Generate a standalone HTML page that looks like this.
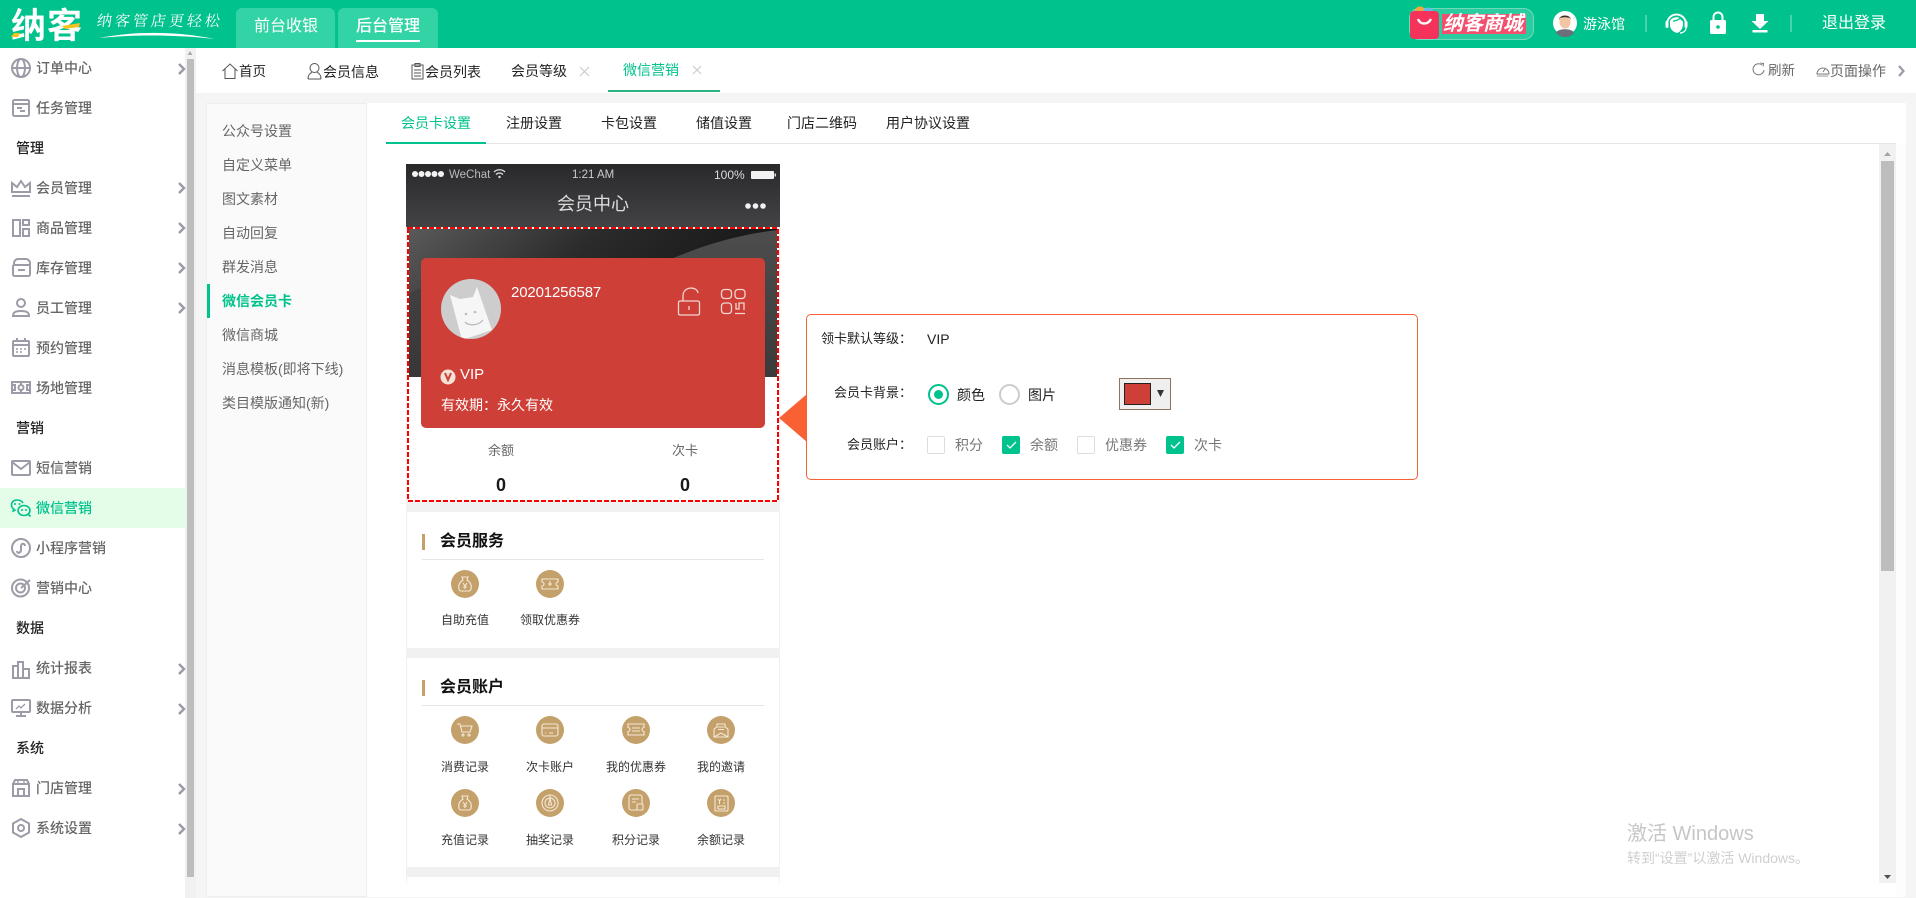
<!DOCTYPE html>
<html lang="zh"><head><meta charset="utf-8"><title>纳客</title>
<style>
html,body{margin:0;padding:0;width:1916px;height:898px;overflow:hidden;background:#f5f5f5}
body{position:relative;font-family:"Liberation Sans","Noto Sans CJK SC",sans-serif;font-size:14px;color:#333}
.a{position:absolute}
.t{position:absolute;white-space:nowrap;line-height:20px;height:20px}
svg{position:absolute;overflow:visible}
.s{left:36px;color:#666;font-weight:500}
.h{left:16px;color:#222;font-weight:500}
.m{left:222px;color:#666}
.l{color:#333;font-size:12px;width:100px;text-align:center}
.f{color:#222;font-size:13px;text-align:right;width:100px;left:812px}
.c{position:absolute;width:16px;height:16px;border:1px solid #ddd;border-radius:2px;top:436px;background:#fff}
.c.on{background:#00c28c;border-color:#00c28c}
</style></head><body>
<!-- header -->
<div class="a" style="left:0;top:0;width:1916px;height:48px;background:#00c28c"></div>
<div class="a" style="left:236px;top:8px;width:99px;height:40px;background:#32d3a5;border-radius:6px 6px 0 0"></div>
<div class="a" style="left:338px;top:8px;width:100px;height:40px;background:#32d3a5;border-radius:6px 6px 0 0"></div>
<div class="t" style="left:254px;top:17px;font-size:16px;color:#fff">前台收银</div>
<div class="t" style="left:356px;top:17px;font-size:16px;color:#fff;font-weight:500">后台管理</div>
<div class="a" style="left:356px;top:40px;width:64px;height:2px;background:#fff"></div>
<div class="t" style="left:11px;top:15px;font-size:35px;line-height:24px;height:24px;color:#fff;font-weight:700;letter-spacing:1px">纳客</div>
<div class="t" style="left:97px;top:11px;font-size:15px;color:#fff;letter-spacing:3px;font-family:'Noto Serif CJK SC',serif;transform:skewX(-8deg)">纳客管店更轻松</div>
<svg style="left:0;top:0" width="240" height="48"><path d="M11 37l3-4h6l-2 4z" fill="#f7c21c"/><path d="M62 26l18-3-1 4-14 2z" fill="#f7c21c"/><path d="M99 38C130 32 170 30 215 39C170 34 130 35 99 38z" fill="#fff"/></svg>
<!-- mall badge -->
<div class="a" style="left:1409px;top:8px;width:123px;height:30px;border:1px solid rgba(255,255,255,.3);background:rgba(255,255,255,.17);border-radius:10px"></div>
<div class="a" style="left:1442px;top:14px;width:84px;height:20px;background:#f3506f"></div>
<svg style="left:0;top:0" width="1916" height="48">
<circle cx="1420" cy="12" r="5.500" fill="#f4a93a"/><circle cx="1428" cy="13" r="5.500" fill="#63b9e8"/>
<rect x="1410" y="11" width="29" height="28" rx="4" fill="#f5335a"/>
<path d="M1418 19c2 6 10 6 13 0" stroke="#fff" stroke-width="2.400" fill="none"/>
<circle cx="1565" cy="23" r="12" fill="#fff"/><path d="M1556 33c1-5 17-5 18 0a12 12 0 0 1-18 0z" fill="#6b6f7a"/><ellipse cx="1565" cy="22" rx="5.500" ry="6.500" fill="#f2c5a3"/><path d="M1559 20c0-6 12-6 12 0l-1-2c-3-1-7-1-10 0z" fill="#3a3030"/>
<rect x="1645.500" y="15" width="1" height="17" fill="#8fe0c8"/><rect x="1790.500" y="15" width="1" height="17" fill="#8fe0c8"/>
<path d="M1667 24a9.500 9.500 0 0 1 19 0" fill="none" stroke="#fff" stroke-width="2"/><path d="M1670 21c2-5 11-5 13 0v4c-1 5-3 7-6 8-4-1-7-4-7-8z" fill="#fff"/><rect x="1665.500" y="21" width="3" height="7" rx="1.500" fill="#fff"/><rect x="1684.500" y="21" width="3" height="7" rx="1.500" fill="#fff"/><path d="M1686 28c0 3-3 5-6 5" stroke="#fff" stroke-width="1.200" fill="none"/>
<path d="M1673 21c2 0 6-1 7-3 1 1 2 2 3 3" stroke="#00c28c" stroke-width="1.300" fill="none"/>
<rect x="1710" y="20" width="16" height="14" rx="1.500" fill="#fff"/><path d="M1713.500 20v-3a4.500 4.500 0 0 1 9 0v3" stroke="#fff" stroke-width="2" fill="none"/><circle cx="1718" cy="27" r="1.800" fill="#00c28c"/>
<path d="M1756 14h8v7h4.500l-8.500 8-8.500-8h4.500z" fill="#fff"/><rect x="1752.500" y="30" width="15" height="2.500" fill="#fff"/>
</svg>
<div class="t" style="left:1443px;top:14px;font-size:20px;color:#fff;font-weight:700;font-style:italic;">纳客商城</div>
<div class="t" style="left:1583px;top:14px;color:#fff">游泳馆</div>
<div class="t" style="left:1822px;top:14px;color:#fff;font-size:16px">退出登录</div>

<!-- sidebar -->
<div class="a" style="left:0;top:48px;width:185px;height:850px;background:#fff"></div>
<div class="a" style="left:185px;top:48px;width:11px;height:850px;background:#f1f1f1"></div>
<div class="a" style="left:187px;top:59px;width:7px;height:818px;background:#bdbdbd"></div>
<div class="a" style="left:0;top:488px;width:185px;height:40px;background:#e4fde9"></div>
<div class="a" style="left:196px;top:48px;width:1720px;height:45px;background:#fff"></div>
<svg style="left:0;top:0" width="196" height="898" fill="none" stroke="#9c9ca8" stroke-width="2">
<path d="M187.500 55l2.500-4 2.500 4z" fill="#aaa" stroke="none"/>
<circle cx="21" cy="68" r="9"/><ellipse cx="21" cy="68" rx="4" ry="9"/><path d="M12 68h18"/>
<rect x="13" y="100" width="16" height="16" rx="1.500"/><path d="M13 104h16M17 108h5M20 111h5"/>
<path d="M12 192v-9l5 4 4-6 4 6 5-4v9zM12 196h18" />
<rect x="13" y="220" width="7" height="16"/><rect x="23" y="220" width="6" height="5"/><rect x="23" y="229" width="6" height="7"/>
<rect x="13" y="265" width="17" height="11" rx="1.500"/><path d="M14 265v-2c0-2 2-4 4-4h8c2 0 4 2 4 4v2M18 270h7"/>
<circle cx="21" cy="303" r="4"/><path d="M13 316c0-4 3-5 8-5s8 1 8 5z"/>
<rect x="13" y="341" width="16" height="15" rx="1"/><path d="M13 345h16M17 338v3M25 338v3" /><path d="M16 349h2M20 349h2M24 349h2M16 352h2M20 352h2" stroke-width="1.400"/>
<rect x="12" y="382" width="18" height="11"/><circle cx="21" cy="387.500" r="2.500"/><path d="M21 382v3M21 390v3M12 385h3v5h-3M30 385h-3v5h3"/>
<rect x="12" y="461" width="18" height="14" rx="1"/><path d="M12 462l9 7 9-7"/>
<g stroke="#00c28c" stroke-width="1.600"><path d="M23 503c-1-2-3-3-6-3-3.500 0-5.500 2.300-5.500 5 0 1.800.8 3 2.200 4l-.5 2 2.500-1"/><ellipse cx="24" cy="510.500" rx="6" ry="5"/><path d="M28 514l2.500 2.500"/></g>
<g fill="#00c28c" stroke="none"><circle cx="15" cy="504" r="1"/><circle cx="19.500" cy="504" r="1"/><circle cx="22" cy="510" r="1"/><circle cx="26" cy="510" r="1"/></g>
<circle cx="21" cy="548" r="9"/><path d="M17 551c0 3 4 2 4-1v-4c0-3 4-3 4 0" />
<circle cx="20.500" cy="588" r="8.500"/><circle cx="20.500" cy="588" r="4.500"/><path d="M21 588l9-8"/>
<path d="M13 678v-12h5v12zM18 678v-16h5v16zM23 678v-9h6v9z"/>
<rect x="12" y="700" width="18" height="12" rx="1"/><path d="M21 712v4M16 716h10"/><path d="M16 709l3-3 2 2 4-4" stroke-width="1.300"/>
<path d="M13 784h16v12H13zM13 784l2-4h12l2 4M18 796v-7h6v7"/><path d="M18 780v4M24 780v4" stroke-width="1.300"/>
<path d="M21 819l8 4.500v9L21 837l-8-4.500v-9z"/><circle cx="21" cy="828" r="3"/>
</svg>
<svg style="left:0;top:0" width="196" height="898" fill="none" stroke="#9a9aa8" stroke-width="2.400">
<path d="M179 64l5 5-5 5M179 183l5 5-5 5M179 223l5 5-5 5M179 263l5 5-5 5M179 303l5 5-5 5M179 664l5 5-5 5M179 704l5 5-5 5M179 784l5 5-5 5M179 824l5 5-5 5"/>
</svg>
<div class="t s" style="top:58px">订单中心</div>
<div class="t s" style="top:98px">任务管理</div>
<div class="t h" style="top:138px">管理</div>
<div class="t s" style="top:178px">会员管理</div>
<div class="t s" style="top:218px">商品管理</div>
<div class="t s" style="top:258px">库存管理</div>
<div class="t s" style="top:298px">员工管理</div>
<div class="t s" style="top:338px">预约管理</div>
<div class="t s" style="top:378px">场地管理</div>
<div class="t h" style="top:418px">营销</div>
<div class="t s" style="top:458px">短信营销</div>
<div class="t s" style="top:498px;color:#00c28c">微信营销</div>
<div class="t s" style="top:538px">小程序营销</div>
<div class="t s" style="top:578px">营销中心</div>
<div class="t h" style="top:618px">数据</div>
<div class="t s" style="top:658px">统计报表</div>
<div class="t s" style="top:698px">数据分析</div>
<div class="t h" style="top:738px">系统</div>
<div class="t s" style="top:778px">门店管理</div>
<div class="t s" style="top:818px">系统设置</div>

<!-- page tabs -->
<svg style="left:0;top:0" width="1916" height="100" fill="none" stroke="#555" stroke-width="1">
<path d="M222.500 71l7.500-7 7.500 7M225 69v9.500h10V69"/>
<circle cx="314.500" cy="68" r="4.500"/><path d="M308 79c0-4 2-6 4-6.500M321 79c0-4-2-6-4-6.500M308 79h13"/>
<rect x="412" y="65" width="11" height="14"/><rect x="415" y="63.500" width="5" height="3"/><path d="M414 70h7M414 73h7M414 76h7"/>
<path d="M580 67l9 9M589 67l-9 9M693 66l8 8M701 66l-8 8" stroke="#ccc" stroke-width="1.200"/>
<path d="M1762 65a5.500 5.500 0 1 0 2 5" stroke="#777"/><path d="M1760.500 63l3 .5-.5 3" stroke="#777"/>
<path d="M1817 74a6 6 0 1 1 12 0h-12z" stroke="#777"/><path d="M1823 72l2-3" stroke="#777"/><path d="M1817 76h11" stroke="#bbb" stroke-width="1.500"/>
<path d="M1899 66l4.500 5-4.500 5" stroke="#9a9aa8" stroke-width="2.200"/>
</svg>
<div class="t" style="left:239px;top:62px;color:#222;font-size:13.500px">首页</div>
<div class="t" style="left:323px;top:62px;color:#222">会员信息</div>
<div class="t" style="left:425px;top:62px;color:#222">会员列表</div>
<div class="t" style="left:511px;top:61px;color:#222">会员等级</div>
<div class="t" style="left:623px;top:60px;color:#00c28c">微信营销</div>
<div class="a" style="left:608px;top:90px;width:112px;height:2px;background:#2fb380"></div>
<div class="t" style="left:1768px;top:61px;color:#666;font-size:13.500px">刷新</div>
<div class="t" style="left:1830px;top:61px;color:#666">页面操作</div>

<!-- main panel -->
<div class="a" style="left:206px;top:103px;width:1700px;height:794px;background:#fff"></div>
<div class="a" style="left:206px;top:103px;width:159px;height:792px;background:#fafafa;border:1px solid #eee"></div>
<div class="a" style="left:207px;top:284px;width:3px;height:34px;background:#00c28c"></div>
<div class="t m" style="top:121px">公众号设置</div>
<div class="t m" style="top:155px">自定义菜单</div>
<div class="t m" style="top:189px">图文素材</div>
<div class="t m" style="top:223px">自动回复</div>
<div class="t m" style="top:257px">群发消息</div>
<div class="t m" style="top:291px;color:#00c28c;font-weight:700">微信会员卡</div>
<div class="t m" style="top:325px">微信商城</div>
<div class="t m" style="top:359px">消息模板(即将下线)</div>
<div class="t m" style="top:393px">类目模版通知(新)</div>

<div class="a" style="left:386px;top:143px;width:1510px;height:1px;background:#e5e5e5"></div>
<div class="a" style="left:386px;top:142px;width:100px;height:2px;background:#00c28c"></div>
<div class="t" style="left:401px;top:113px;color:#00c28c">会员卡设置</div>
<div class="t" style="left:506px;top:113px;color:#222">注册设置</div>
<div class="t" style="left:601px;top:113px;color:#222">卡包设置</div>
<div class="t" style="left:696px;top:113px;color:#222">储值设置</div>
<div class="t" style="left:787px;top:113px;color:#222">门店二维码</div>
<div class="t" style="left:886px;top:113px;color:#222">用户协议设置</div>

<!-- right scrollbar -->
<div class="a" style="left:1879px;top:144px;width:17px;height:739px;background:#f1f1f1"></div>
<div class="a" style="left:1881px;top:161px;width:13px;height:410px;background:#bdbdbd"></div>
<div class="a" style="left:1896px;top:144px;width:10px;height:753px;background:#fdfdfd"></div>
<svg style="left:1879px;top:144px" width="17" height="739"><path d="M5 12l3.500-4 3.500 4z" fill="#a3a3a3"/><path d="M5 731h7l-3.500 4z" fill="#505050"/></svg>

<!-- phone -->
<div class="a" style="left:406px;top:164px;width:374px;height:719px;background:#f1f1f1"></div>
<div class="a" style="left:407px;top:512px;width:372px;height:136px;background:#fff"></div>
<div class="a" style="left:407px;top:658px;width:372px;height:209px;background:#fff"></div>
<div class="a" style="left:407px;top:877px;width:372px;height:6px;background:#fff"></div>
<div class="a" style="left:406px;top:164px;width:374px;height:63px;background:linear-gradient(#29292b,#434345)"></div>
<div class="a" style="left:407px;top:228px;width:372px;height:274px;background:#fff"></div>
<svg style="left:0;top:0" width="1916" height="898">
<defs><linearGradient id="g" x1="0" y1="0" x2="1" y2=".4"><stop offset="0" stop-color="#5a5a5a"/><stop offset=".45" stop-color="#2b2b2b"/><stop offset="1" stop-color="#121212"/></linearGradient><linearGradient id="g2" x1="0" y1="0" x2="0" y2="1"><stop offset="0" stop-color="#4d4d4d"/><stop offset="1" stop-color="#3a3a3a"/></linearGradient></defs>
<rect x="407" y="228" width="372" height="149" fill="url(#g)"/>
<path d="M665 262C700 245 745 233 779 230V377H660z" fill="url(#g2)"/>
<path d="M407 295C420 285 440 282 470 300V377H407z" fill="#3a3a3a" opacity=".55"/>
<rect x="408" y="228" width="370" height="273" fill="none" stroke="#fff" stroke-width="2"/>
<rect x="408" y="228" width="370" height="273" fill="none" stroke="#f00" stroke-width="2" stroke-dasharray="5 2"/>
<g fill="#f2f2f2"><circle cx="415" cy="174" r="3"/><circle cx="421.500" cy="174" r="3"/><circle cx="428" cy="174" r="3"/><circle cx="434.500" cy="174" r="3"/><circle cx="441" cy="174" r="3"/><circle cx="748" cy="206" r="2.800"/><circle cx="755.500" cy="206" r="2.800"/><circle cx="763" cy="206" r="2.800"/></g>
<path d="M494 172c3-3 8-3 11 0M496 174.500c2-2 5-2 7 0" stroke="#ddd" fill="none" stroke-width="1.300"/><circle cx="499.500" cy="177" r="1.200" fill="#ddd"/>
<rect x="751" y="171" width="23" height="8" rx="1" fill="#f2f2f2"/><rect x="774.500" y="173.500" width="1.500" height="3" fill="#ddd"/>
</svg>
<div class="t" style="left:449px;top:165px;color:#bbb;font-size:11.500px">WeChat</div>
<div class="t" style="left:572px;top:165px;color:#ccc;font-size:11.500px">1:21 AM</div>
<div class="t" style="left:714px;top:165px;color:#ddd;font-size:12px">100%</div>
<div class="t" style="left:557px;top:194px;color:#ddd;font-size:18px;line-height:20px">会员中心</div>

<!-- red card -->
<div class="a" style="left:421px;top:258px;width:344px;height:170px;background:#ce3f37;border-radius:5px"></div>
<svg style="left:0;top:0" width="1916" height="898">
<clipPath id="av"><circle cx="471" cy="309" r="30"/></clipPath>
<circle cx="471" cy="309" r="30" fill="#cdcdcd"/>
<g clip-path="url(#av)"><path d="M450 295l10 4 13-2 4-10 15 43-30 10z" fill="#f6f6f6"/></g>
<circle cx="466" cy="314" r="1.300" fill="#bbb"/><circle cx="475" cy="312" r="1.300" fill="#bbb"/><path d="M465 322c4 4 13 4 18-2" stroke="#bbb" fill="none" stroke-width="1.300"/>
<g stroke="#f1d6d2" fill="none" stroke-width="1.300"><rect x="678.500" y="301" width="21" height="14" rx="1.500"/><path d="M683 301v-5c0-10 14-10 15-3"/><path d="M689 306v4"/>
<rect x="721.500" y="289.500" width="10" height="9" rx="3"/><rect x="735" y="289.500" width="10" height="9" rx="3"/><rect x="721.500" y="303" width="10" height="10.500" rx="3"/><path d="M736 303v6h3v-6h5v7M735 313.500h10"/></g>
<circle cx="448" cy="377" r="7.500" fill="#f3e3d6"/><path d="M445 373l3 7 3-7" stroke="#ce3f37" stroke-width="2" fill="none"/>
</svg>
<div class="t" style="left:511px;top:283px;color:#fff;font-size:15px;letter-spacing:-.15px">20201256587</div>
<div class="t" style="left:460px;top:365px;color:#fff;font-size:15px">VIP</div>
<div class="t" style="left:441px;top:395px;color:#fff">有效期：永久有效</div>
<div class="t" style="left:488px;top:441px;color:#666;font-size:13px">余额</div>
<div class="t" style="left:672px;top:441px;color:#666;font-size:13px">次卡</div>
<div class="t" style="left:496px;top:475px;color:#1a1a1a;font-size:18px;font-weight:700">0</div>
<div class="t" style="left:680px;top:475px;color:#1a1a1a;font-size:18px;font-weight:700">0</div>

<!-- sections -->
<div class="a" style="left:422px;top:534px;width:3px;height:16px;background:#c4a06a"></div>
<div class="t" style="left:440px;top:532px;font-size:16px;font-weight:700;color:#111">会员服务</div>
<div class="a" style="left:422px;top:559px;width:342px;height:1px;background:#e5e5e5"></div>
<div class="a" style="left:422px;top:680px;width:3px;height:16px;background:#c4a06a"></div>
<div class="t" style="left:440px;top:678px;font-size:16px;font-weight:700;color:#111">会员账户</div>
<div class="a" style="left:422px;top:705px;width:342px;height:1px;background:#e5e5e5"></div>
<svg style="left:0;top:0" width="1916" height="898">
<g fill="#c4a06a"><circle cx="465" cy="584" r="14"/><circle cx="550" cy="584" r="14"/><circle cx="465" cy="730" r="14"/><circle cx="550" cy="730" r="14"/><circle cx="636" cy="730" r="14"/><circle cx="721" cy="730" r="14"/><circle cx="465" cy="803" r="14"/><circle cx="550" cy="803" r="14"/><circle cx="636" cy="803" r="14"/><circle cx="721" cy="803" r="14"/></g>
<g fill="none" stroke="#f3e9d8" stroke-width="1.100">
<path d="M462 577h6l-1 3c3 2 5 5 4 9 0 1-1 2-2 2h-8c-1 0-2-1-2-2-1-4 1-7 4-9zM463 583l2 3 2-3M465 586v3M463 587h4"/>
<path d="M542 579h16v3a2 2 0 0 0 0 4v3h-16v-3a2 2 0 0 0 0-4zM550 581v2M548 584h4M550 582v4"/>
<path d="M457 724h3l2 8h8l2-6h-11"/><circle cx="463" cy="735" r="1"/><circle cx="469" cy="735" r="1"/>
<rect x="542" y="724" width="16" height="12" rx="2"/><path d="M542 728h16M545 733h1M549 733h4"/>
<path d="M628 724h16v3.500a2 2 0 0 0 0 4v3.500h-16v-3.500a2 2 0 0 0 0-4zM632 728h8M632 731h8"/>
<path d="M714 729v8h14v-8M714 729l3-2v-3h8v3l3 2M714 737l7-4 7 4M718 727h6M718 729.500h6"/>
<path d="M462 796h6l-1 3c3 2 5 5 4 9 0 1-1 2-2 2h-8c-1 0-2-1-2-2-1-4 1-7 4-9zM463 802l2 3 2-3M465 805v3M463 806h4"/>
<circle cx="550" cy="803" r="8"/><circle cx="550" cy="803" r="5"/><path d="M550 798l-1.500 7h3zM550 795v3"/>
<rect x="629" y="795" width="13" height="15" rx="2"/><path d="M632 799h7M632 802h4"/><rect x="637" y="804" width="6" height="6" rx="1" fill="#c4a06a"/>
<rect x="715" y="796" width="13" height="15" rx="1"/><path d="M718 799l1.500 2 1.500-2M719.500 801v3M723 800h2M723 803h2M718 806h7v3h-7z"/>
</g></svg>
<div class="t l" style="left:415px;top:610px">自助充值</div>
<div class="t l" style="left:500px;top:610px">领取优惠券</div>
<div class="t l" style="left:415px;top:757px">消费记录</div>
<div class="t l" style="left:500px;top:757px">次卡账户</div>
<div class="t l" style="left:586px;top:757px">我的优惠券</div>
<div class="t l" style="left:671px;top:757px">我的邀请</div>
<div class="t l" style="left:415px;top:830px">充值记录</div>
<div class="t l" style="left:500px;top:830px">抽奖记录</div>
<div class="t l" style="left:586px;top:830px">积分记录</div>
<div class="t l" style="left:671px;top:830px">余额记录</div>
<div class="a" style="left:406px;top:883px;width:374px;height:14px;background:#fff"></div>

<!-- form box -->
<div class="a" style="left:806px;top:314px;width:610px;height:164px;border:1px solid #f96135;border-radius:5px;background:#fff"></div>
<svg style="left:0;top:0" width="1916" height="898"><path d="M779 418l28-24v48z" fill="#f96135"/></svg>
<div class="t f" style="top:329px;">领卡默认等级：</div>
<div class="t" style="left:927px;top:329px;color:#222">VIP</div>
<div class="t f" style="top:383px">会员卡背景：</div>
<div class="a" style="left:928px;top:384px;width:17px;height:17px;border:2px solid #00c28c;border-radius:50%;background:#fff"></div>
<div class="a" style="left:934px;top:390px;width:9px;height:9px;border-radius:50%;background:#00c28c"></div>
<div class="t" style="left:957px;top:385px;color:#222">颜色</div>
<div class="a" style="left:999px;top:384px;width:17px;height:17px;border:2px solid #ccc;border-radius:50%;background:#fff"></div>
<div class="t" style="left:1028px;top:385px;color:#222">图片</div>
<div class="a" style="left:1119px;top:378px;width:50px;height:30px;border:1px solid #8c735f;background:#efefef"></div>
<div class="a" style="left:1124px;top:383px;width:25px;height:20px;border:1px solid #222;background:#ce3f37"></div>
<svg style="left:0;top:0" width="1916" height="898"><path d="M1157 390h7l-3.500 7z" fill="#333"/></svg>
<div class="t f" style="top:435px">会员账户：</div>
<div class="c" style="left:927px"></div>
<div class="t" style="left:955px;top:435px;color:#777">积分</div>
<div class="c on" style="left:1002px"></div>
<div class="t" style="left:1030px;top:435px;color:#777">余额</div>
<div class="c" style="left:1077px"></div>
<div class="t" style="left:1105px;top:435px;color:#777">优惠券</div>
<div class="c on" style="left:1166px"></div>
<div class="t" style="left:1194px;top:435px;color:#777">次卡</div>
<svg style="left:0;top:0" width="1916" height="898" fill="none" stroke="#fff" stroke-width="1.300"><path d="M1007 445l3 3 6-6M1171 445l3 3 6-6"/></svg>

<!-- watermark -->
<div class="t" style="left:1627px;top:824px;color:#c6c6c6;font-size:20px;">激活 Windows</div>
<div class="t" style="left:1627px;top:848px;color:#cfcfcf;font-size:14px">转到“设置”以激活 Windows。</div>
</body></html>
